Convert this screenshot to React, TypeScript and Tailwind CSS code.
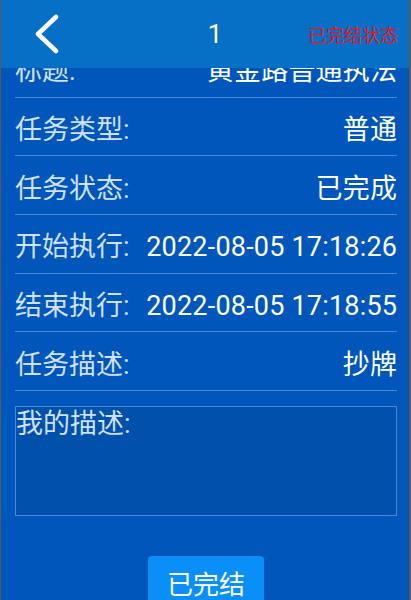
import { useState } from "react";

interface InfoRow {
  label: string;
  value: string;
}

const rows: InfoRow[] = [
  { label: "标题:", value: "黄金路普通执法" },
  { label: "任务类型:", value: "普通" },
  { label: "任务状态:", value: "已完成" },
  { label: "开始执行:", value: "2022-08-05 17:18:26" },
  { label: "结束执行:", value: "2022-08-05 17:18:55" },
  { label: "任务描述:", value: "抄牌" },
];

const font = "font-['Roboto','Noto_Sans_CJK_SC',sans-serif]";

const App = () => {
  const [note, setNote] = useState("");

  return (
    <div className={`w-[411px] h-[600px] overflow-hidden flex flex-col bg-[#0056ba] border-l border-r-2 border-[#5a5a5a] ${font}`}>
      {/* Top bar */}
      <div className="h-[68px] shrink-0 flex items-center bg-[#0570c6] relative z-10">
        <div className="w-[121px] flex items-center pl-[33px]">
          <svg width="28" height="40" viewBox="0 0 28 40" fill="none">
            <polyline points="22,3 4,20 22,37" stroke="white" strokeWidth="4.5" strokeLinecap="round" strokeLinejoin="round" />
          </svg>
        </div>
        <div className="flex-1 text-center text-white text-[26px] leading-none">1</div>
        <div className="pr-[11px] text-[18px] text-[#e8141c] leading-none whitespace-nowrap font-['Noto_Sans_CJK_SC',sans-serif]">已完结状态</div>
      </div>

      {/* Content, scrolled so the title row sits under the bar */}
      <div className="flex-1 overflow-hidden">
        <div className="-mt-[29px] px-[14px] pr-[12px]">
          {rows.map(row => (
            <div
              key={row.label}
              className="h-[58.7px] pt-[8px] flex items-center justify-between gap-2 border-b border-[#4d86d2] text-[27px] leading-none whitespace-nowrap"
            >
              <span className="text-[#cfe1f6] shrink-0">{row.label}</span>
              <span className="text-white shrink-0 tracking-[0.2px] -mr-[0.2px]">{row.value}</span>
            </div>
          ))}

          <div className="mt-[15px] h-[110px] border border-[#4d86d2] bg-[#0050ac]">
            <textarea
              value={note}
              onChange={(e) => setNote(e.target.value)}
              placeholder="我的描述:"
              className="w-full h-full resize-none bg-transparent outline-none text-white text-[27px] leading-[34px] placeholder:text-[#cfe1f6] p-0"
            />
          </div>

          <div className="mt-[40px] flex justify-center">
            <button className="w-[116px] h-[50px] bg-[#0a8ff9] rounded-[4px] text-white text-[26px] leading-none pt-[4px] font-['Noto_Sans_CJK_SC',sans-serif]">
              已完结
            </button>
          </div>
        </div>
      </div>
    </div>
  );
};

export default App;
